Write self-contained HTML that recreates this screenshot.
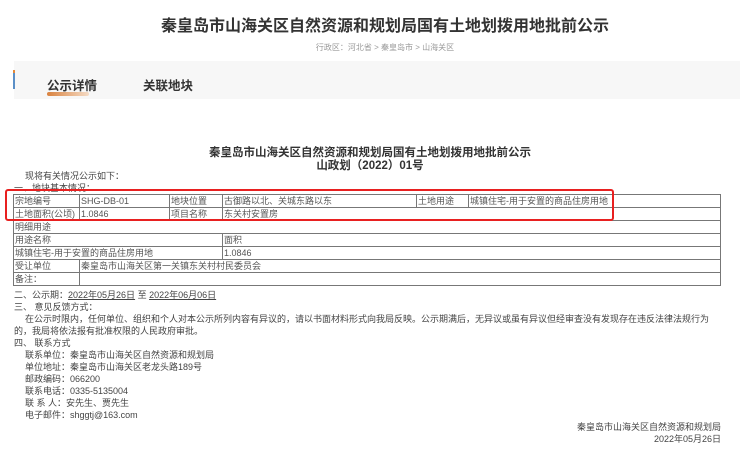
<!DOCTYPE html>
<html><head><meta charset="utf-8"><style>
body{margin:0;width:740px;height:458px;background:#fff;font-family:"Liberation Sans","Noto Sans CJK SC",sans-serif;color:#333;position:relative;overflow:hidden}
.a{position:absolute;white-space:nowrap}
table{position:absolute;left:13px;top:194px;width:708px;border-collapse:collapse;table-layout:fixed;font-size:9px;color:#555}
td{border:1px solid #777;height:12px;padding:0 0 0 1px;line-height:12px;overflow:hidden;white-space:nowrap}
.t{font-size:9px;color:#444;line-height:12px}
u{text-decoration:underline}
</style></head><body>
<div class="a" style="left:0;width:770px;text-align:center;top:12px;font-size:16px;font-weight:bold;color:#333">秦皇岛市山海关区自然资源和规划局国有土地划拨用地批前公示</div>
<div class="a" style="left:0;width:770px;text-align:center;top:42px;font-size:8px;color:#999">行政区：河北省 &gt; 秦皇岛市 &gt; 山海关区</div>
<div class="a" style="left:14px;top:61px;width:726px;height:38px;background:#f7f7f7"></div>
<div class="a" style="left:13px;top:73px;width:2px;height:16px;background:#5b8fc7"></div>
<div class="a" style="left:13px;top:70px;width:2px;height:3px;background:#e58a3a"></div>
<div class="a" style="left:47px;top:75px;font-size:12.5px;font-weight:bold;color:#333">公示详情</div>
<div class="a" style="left:143px;top:75px;font-size:12.5px;font-weight:bold;color:#333">关联地块</div>
<div class="a" style="left:47px;top:92px;width:42px;height:4px;border-radius:2px;background:linear-gradient(90deg,#d9823f,#f5dcc6)"></div>
<div class="a" style="left:0;width:740px;text-align:center;top:144px;font-size:11.5px;font-weight:bold;color:#333">秦皇岛市山海关区自然资源和规划局国有土地划拨用地批前公示</div>
<div class="a" style="left:0;width:740px;text-align:center;top:157px;font-size:11.5px;font-weight:bold;color:#333">山政划（2022）01号</div>
<div class="a t" style="left:25px;top:170px">现将有关情况公示如下：</div>
<div class="a t" style="left:14px;top:182px">一、地块基本情况：</div>
<table>
<colgroup><col style="width:66px"><col style="width:90px"><col style="width:53px"><col style="width:194px"><col style="width:52px"><col></colgroup>
<tr><td>宗地编号</td><td>SHG-DB-01</td><td>地块位置</td><td>古御路以北、关城东路以东</td><td>土地用途</td><td>城镇住宅-用于安置的商品住房用地</td></tr>
<tr><td>土地面积(公顷)</td><td>1.0846</td><td>项目名称</td><td colspan="3">东关村安置房</td></tr>
<tr><td colspan="6">明细用途</td></tr>
<tr><td colspan="3">用途名称</td><td colspan="3">面积</td></tr>
<tr><td colspan="3">城镇住宅-用于安置的商品住房用地</td><td colspan="3">1.0846</td></tr>
<tr><td>受让单位</td><td colspan="5">秦皇岛市山海关区第一关镇东关村村民委员会</td></tr>
<tr><td>备注：</td><td colspan="5"></td></tr>
</table>
<div class="a" style="left:5px;top:189px;width:605px;height:28px;border:2px solid #e82020;border-radius:3px"></div>
<div class="a t" style="left:14px;top:289px">二、公示期：<u>2022年05月26日</u> 至 <u>2022年06月06日</u></div>
<div class="a t" style="left:14px;top:301px">三、 意见反馈方式：</div>
<div class="a t" style="left:25px;top:313px;font-size:9px">在公示时限内，任何单位、组织和个人对本公示所列内容有异议的，请以书面材料形式向我局反映。公示期满后，无异议或虽有异议但经审查没有发现存在违反法律法规行为</div>
<div class="a t" style="left:14px;top:325px">的，我局将依法报有批准权限的人民政府审批。</div>
<div class="a t" style="left:14px;top:337px">四、 联系方式</div>
<div class="a t" style="left:25px;top:349px">联系单位：秦皇岛市山海关区自然资源和规划局</div>
<div class="a t" style="left:25px;top:361px">单位地址：秦皇岛市山海关区老龙头路189号</div>
<div class="a t" style="left:25px;top:373px">邮政编码：066200</div>
<div class="a t" style="left:25px;top:385px">联系电话：0335-5135004</div>
<div class="a t" style="left:25px;top:397px">联 系 人：安先生、贾先生</div>
<div class="a t" style="left:25px;top:409px">电子邮件：shggtj@163.com</div>
<div class="a t" style="right:19px;top:421px">秦皇岛市山海关区自然资源和规划局</div>
<div class="a t" style="right:19px;top:433px">2022年05月26日</div>
</body></html>
